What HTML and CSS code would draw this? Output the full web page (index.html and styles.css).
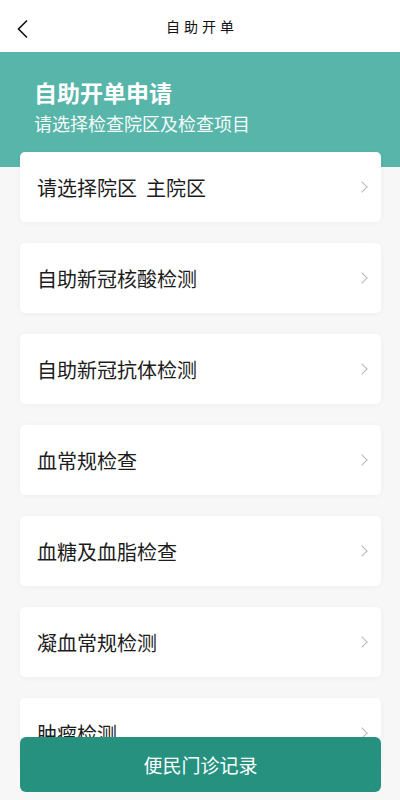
FILE: index.html
```html
<!doctype html>
<html>
<head>
<meta charset="utf-8">
<title>自助开单</title>
<link rel="stylesheet" href="styles.css">
</head>
<body>
<div class="page">
	<div class="nav">
		<a class="back">
			<svg width="14" height="20" viewBox="0 0 14 20"><path d="M11 1.5 L2.5 10 L11 18.5" fill="none" stroke="#111" stroke-width="1.6"/></svg>
		</a>
		<span class="nav-title">自助开单</span>
	</div>
	<div class="banner">
		<h1>自助开单申请</h1>
		<p>请选择检查院区及检查项目</p>
	</div>
	<div class="list">
		<div class="item"><span>请选择院区&nbsp;&nbsp;主院区</span><i class="arrow"></i></div>
		<div class="item"><span>自助新冠核酸检测</span><i class="arrow"></i></div>
		<div class="item"><span>自助新冠抗体检测</span><i class="arrow"></i></div>
		<div class="item"><span>血常规检查</span><i class="arrow"></i></div>
		<div class="item"><span>血糖及血脂检查</span><i class="arrow"></i></div>
		<div class="item"><span>凝血常规检测</span><i class="arrow"></i></div>
		<div class="item"><span>肿瘤检测</span><i class="arrow"></i></div>
	</div>
	<a class="record-btn">便民门诊记录</a>
</div>
</body>
</html>
```

FILE: styles.css
```css
	*{
		margin:0;
		padding:0;
		box-sizing:border-box;
		}
	body{
		background:#f7f7f7;
		font-family:"Noto Sans CJK SC","Noto Sans",sans-serif;
		}
	.page{
		width:400px;
		height:800px;
		overflow:hidden;
		position:relative;
		}
	.nav{
		height:52px;
		background:#fff;
		display:flex;
		align-items:center;
		justify-content:center;
		position:relative;
		}
	.back{
		position:absolute;
		left:16px;
		top:19px;
		}
	.nav-title{
		font-size:14px;
		letter-spacing:4px;
		color:#111;
		margin-left:4px;
		}
	.banner{
		height:115px;
		background:#57b5a9;
		padding:24px 0 0 34px;
		color:#fff;
		}
	.banner h1{
		font-size:23px;
		font-weight:bold;
		line-height:32px;
		}
	.banner p{
		font-size:18px;
		line-height:24px;
		margin-top:3px;
		opacity:0.95;
		}
	.list{
		margin-top:-15px;
		padding:0 19px 0 20px;
		display:flex;
		flex-direction:column;
		gap:21px;
		}
	.item{
		height:70px;
		background:#fff;
		border-radius:5px;
		box-shadow:0 1px 6px rgba(0,0,0,0.04);
		display:flex;
		align-items:center;
		justify-content:space-between;
		padding:0 15px 0 17px;
		font-size:20px;
		color:#1c1c1c;
		}
	.arrow{
		width:8px;
		height:8px;
		border-top:1.4px solid #b8b8b8;
		border-right:1.4px solid #b8b8b8;
		transform:rotate(45deg);
		}
	.record-btn{
		position:absolute;
		left:20px;
		top:737px;
		width:361px;
		height:55px;
		border-radius:6px;
		background:#26917f;
		color:#fff;
		font-size:19px;
		display:flex;
		align-items:center;
		justify-content:center;
		}
```
